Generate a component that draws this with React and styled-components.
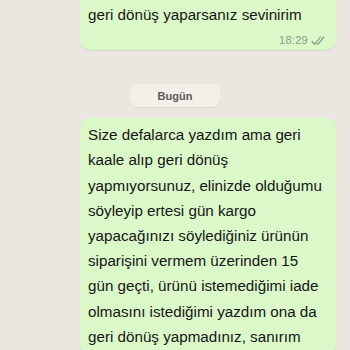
import React from 'react';
import styled, { createGlobalStyle } from 'styled-components';

const GlobalStyle = createGlobalStyle`
  html, body {
    margin: 0;
    padding: 0;
    background: #ebe7e0;
  }
  body {
    font-family: "Liberation Sans", Arial, sans-serif;
    -webkit-font-smoothing: antialiased;
  }
`;

const Chat = styled.div`
  width: 350px;
  height: 350px;
  overflow: hidden;
  display: flex;
  flex-direction: column;
  align-items: flex-end;
  padding-right: 14px;
  box-sizing: border-box;
  background: #ebe7e0;
`;

const Bubble = styled.div`
  width: 256px;
  box-sizing: border-box;
  background: #dbf8c9;
  border-radius: ${(p) => (p.$cut ? '0 0 10px 10px' : '10px')};
  padding: ${(p) => (p.$cut ? '2px 9px 1px 8px' : '4px 4px 6px 8px')};
  margin-top: ${(p) => p.$top || 0}px;
  box-shadow: 0 1px 0.5px rgba(0, 0, 0, 0.08);
`;

const Text = styled.div`
  font-size: 15.2px;
  line-height: 25.2px;
  color: #161616;
  white-space: pre;
`;

const Meta = styled.div`
  display: flex;
  justify-content: flex-end;
  align-items: center;
  gap: 3px;
  height: 18px;
  padding-top: 4px;
  font-size: 11px;
  color: #8c9a88;
  letter-spacing: 0.3px;
`;

const DayRow = styled.div`
  align-self: stretch;
  display: flex;
  justify-content: center;
  padding-left: 14px;
  margin-top: 34px;
`;

const DayPill = styled.div`
  width: 90px;
  height: 23px;
  border-radius: 8px;
  background: #f3f0ea;
  display: flex;
  align-items: center;
  justify-content: center;
  font-size: 11px;
  font-weight: 700;
  color: #5b5a57;
  box-shadow: 0 1px 0.5px rgba(0, 0, 0, 0.06);
`;

const Ticks = () => (
  <svg width="16" height="11" viewBox="0 0 16 11" fill="none">
    <path d="M1 6.5l2.6 2.8L9.4 2" stroke="#8c9a88" strokeWidth="1.2" strokeLinecap="round" strokeLinejoin="round" />
    <path d="M6.2 8.6l0.7 0.7L12.8 2" stroke="#8c9a88" strokeWidth="1.2" strokeLinecap="round" strokeLinejoin="round" />
  </svg>
);

const App = () => (
  <>
    <GlobalStyle />
    <Chat>
      <Bubble $cut>
        <Text>geri dönüş yaparsanız sevinirim</Text>
        <Meta>
          18:29 <Ticks />
        </Meta>
      </Bubble>
      <DayRow>
        <DayPill>Bugün</DayPill>
      </DayRow>
      <Bubble $top={11}>
        <Text>
          {'Size defalarca yazdım ama geri\nkaale alıp geri dönüş\nyapmıyorsunuz, elinizde olduğumu\nsöyleyip ertesi gün kargo\nyapacağınızı söylediğiniz ürünün\nsiparişini vermem üzerinden 15\ngün geçti, ürünü istemediğimi iade\nolmasını istediğimi yazdım ona da\ngeri dönüş yapmadınız, sanırım'}
        </Text>
      </Bubble>
    </Chat>
  </>
);

export default App;
